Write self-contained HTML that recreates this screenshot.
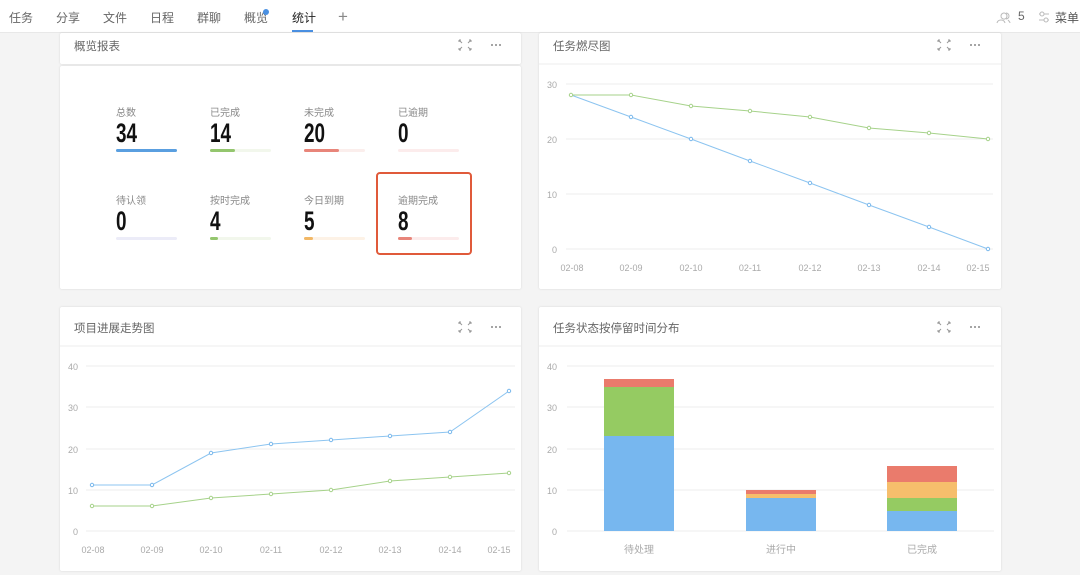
<!DOCTYPE html>
<html><head><meta charset="utf-8"><style>
*{margin:0;padding:0;box-sizing:border-box}
body{width:1080px;height:575px;overflow:hidden;background:#f4f4f4;font-family:"Liberation Sans","Noto Sans CJK SC",sans-serif;position:relative}
.nav{position:absolute;left:0;top:0;width:1080px;height:33px;background:#fff;border-bottom:1px solid #e8e8e8}
.nav span{position:absolute;top:9px;font-size:12px;color:#666}
.card{position:absolute;background:#fff;box-shadow:0 0 2px rgba(0,0,0,.12);border-radius:2px}
.ttl{position:absolute;font-size:11.5px;color:#666}
.lbl{position:absolute;font-size:10px;color:#888}
.num{position:absolute;font-family:"Liberation Sans",sans-serif;font-weight:bold;font-size:27px;line-height:27px;color:#111;transform:scaleX(.7);transform-origin:left}
.bar{position:absolute;height:3px;width:61px;border-radius:2px}
.bar i{display:block;height:3px;border-radius:2px}
svg{position:absolute;left:0;top:0}
</style></head><body>
<div class="nav">
<span style="left:9px">任务</span><span style="left:56px">分享</span><span style="left:103px">文件</span><span style="left:150px">日程</span><span style="left:197px">群聊</span><span style="left:244px">概览</span><span style="left:292px;color:#222">统计</span>
<span style="left:338px;font-size:17px;top:7px;color:#888">+</span>
<div style="position:absolute;left:263px;top:9px;width:6px;height:6px;border-radius:50%;background:#4a90e2"></div>
<div style="position:absolute;left:292px;top:30px;width:21px;height:2px;background:#4a90e2"></div>
<span style="left:1018px;color:#666">5</span><span style="left:1055px;color:#555">菜单</span>
</div>
<div class="card" style="left:60px;top:33px;width:461px;height:31px"></div>
<div class="card" style="left:60px;top:66px;width:461px;height:223px"></div>
<div class="card" style="left:539px;top:33px;width:462px;height:256px"></div>
<div class="card" style="left:60px;top:307px;width:461px;height:264px"></div>
<div class="card" style="left:539px;top:307px;width:462px;height:264px"></div>
<div class="ttl" style="left:74px;top:38px">概览报表</div>
<div class="ttl" style="left:553px;top:38px">任务燃尽图</div>
<div class="ttl" style="left:74px;top:320px">项目进展走势图</div>
<div class="ttl" style="left:553px;top:320px">任务状态按停留时间分布</div>

<div class="lbl" style="left:116px;top:104px">总数</div><div class="num" style="left:116px;top:120px">34</div><div class="bar" style="left:116px;top:149px;background:#e8f1fb"><i style="width:61px;background:#5a9fe0"></i></div>
<div class="lbl" style="left:210px;top:104px">已完成</div><div class="num" style="left:210px;top:120px">14</div><div class="bar" style="left:210px;top:149px;background:#f2f7ec"><i style="width:25px;background:#94c66e"></i></div>
<div class="lbl" style="left:304px;top:104px">未完成</div><div class="num" style="left:304px;top:120px">20</div><div class="bar" style="left:304px;top:149px;background:#fbeeec"><i style="width:35px;background:#e8857a"></i></div>
<div class="lbl" style="left:398px;top:104px">已逾期</div><div class="num" style="left:398px;top:120px">0</div><div class="bar" style="left:398px;top:149px;background:#fcecec"></div>
<div class="lbl" style="left:116px;top:192px">待认领</div><div class="num" style="left:116px;top:208px">0</div><div class="bar" style="left:116px;top:237px;background:#ececf8"></div>
<div class="lbl" style="left:210px;top:192px">按时完成</div><div class="num" style="left:210px;top:208px">4</div><div class="bar" style="left:210px;top:237px;background:#f2f7ec"><i style="width:8px;background:#94c66e"></i></div>
<div class="lbl" style="left:304px;top:192px">今日到期</div><div class="num" style="left:304px;top:208px">5</div><div class="bar" style="left:304px;top:237px;background:#fdf2e6"><i style="width:9px;background:#f2b866"></i></div>
<div style="position:absolute;left:376px;top:172px;width:96px;height:83px;border:2px solid #e05a3a;border-radius:4px"></div>
<div class="lbl" style="left:398px;top:192px">逾期完成</div><div class="num" style="left:398px;top:208px">8</div><div class="bar" style="left:398px;top:237px;background:#fcecec"><i style="width:14px;background:#e8857a"></i></div>

<svg width="1080" height="575" font-family="Liberation Sans" font-size="9" fill="#aaa">
<g stroke="#bbb" fill="none" stroke-width="1">
<path d="M1001 16a3 3 0 1 1 0 .1M997 23c1-4 7-4 8 0M1006 13a3 3 0 0 1 0 6M1008 20c1 1 2 2 2 3"/>
<path d="M1039 14h10M1039 20h10"/><circle cx="1042" cy="14" r="2" fill="#fff"/><circle cx="1046" cy="20" r="2" fill="#fff"/>
</g>
<g stroke="#999" stroke-width="1" fill="none">
<path d="M459 40l3 3M459 40v2M459 40h2M471 40l-3 3M471 40v2M471 40h-2M459 50l3-3M459 50v-2M459 50h2M471 50l-3-3M471 50v-2M471 50h-2"/>
<path d="M938 40l3 3M938 40v2M938 40h2M950 40l-3 3M950 40v2M950 40h-2M938 50l3-3M938 50v-2M938 50h2M950 50l-3-3M950 50v-2M950 50h-2"/>
<path d="M459 322l3 3M459 322v2M459 322h2M471 322l-3 3M471 322v2M471 322h-2M459 332l3-3M459 332v-2M459 332h2M471 332l-3-3M471 332v-2M471 332h-2"/>
<path d="M938 322l3 3M938 322v2M938 322h2M950 322l-3 3M950 322v2M950 322h-2M938 332l3-3M938 332v-2M938 332h2M950 332l-3-3M950 332v-2M950 332h-2"/>
</g>
<g fill="#888"><circle cx="492" cy="45" r="1"/><circle cx="496" cy="45" r="1"/><circle cx="500" cy="45" r="1"/><circle cx="971" cy="45" r="1"/><circle cx="975" cy="45" r="1"/><circle cx="979" cy="45" r="1"/><circle cx="492" cy="327" r="1"/><circle cx="496" cy="327" r="1"/><circle cx="500" cy="327" r="1"/><circle cx="971" cy="327" r="1"/><circle cx="975" cy="327" r="1"/><circle cx="979" cy="327" r="1"/></g>
<g stroke="#eee"><path d="M539 64h462M60 346h461M539 346h462"/>
<path d="M566 84h427M566 139h427M566 194h427M566 249h427"/>
<path d="M86 366h429M86 407h429M86 449h429M86 490h429M86 531h429"/>
<path d="M567 366h427M567 407h427M567 449h427M567 490h427M567 531h427"/></g>
<g text-anchor="end"><text x="557" y="88">30</text><text x="557" y="143">20</text><text x="557" y="198">10</text><text x="557" y="253">0</text>
<text x="78" y="370">40</text><text x="78" y="411">30</text><text x="78" y="453">20</text><text x="78" y="494">10</text><text x="78" y="535">0</text>
<text x="557" y="370">40</text><text x="557" y="411">30</text><text x="557" y="453">20</text><text x="557" y="494">10</text><text x="557" y="535">0</text></g>
<g text-anchor="middle"><text x="572" y="271">02-08</text><text x="631" y="271">02-09</text><text x="691" y="271">02-10</text><text x="750" y="271">02-11</text><text x="810" y="271">02-12</text><text x="869" y="271">02-13</text><text x="929" y="271">02-14</text><text x="978" y="271">02-15</text>
<text x="93" y="553">02-08</text><text x="152" y="553">02-09</text><text x="211" y="553">02-10</text><text x="271" y="553">02-11</text><text x="331" y="553">02-12</text><text x="390" y="553">02-13</text><text x="450" y="553">02-14</text><text x="499" y="553">02-15</text>
<text x="639" y="553" font-size="10">待处理</text><text x="781" y="553" font-size="10">进行中</text><text x="922" y="553" font-size="10">已完成</text></g>
<g fill="#fff" stroke-width="1">
<polyline fill="none" stroke="#a6d28a" points="571,95 631,95 691,106 750,111 810,117 869,128 929,133 988,139"/>
<polyline fill="none" stroke="#8cc4f0" points="571,95 631,117 691,139 750,161 810,183 869,205 929,227 988,249"/>
<g stroke="#a6d28a"><circle cx="571" cy="95" r="1.7"/><circle cx="631" cy="95" r="1.7"/><circle cx="691" cy="106" r="1.7"/><circle cx="750" cy="111" r="1.7"/><circle cx="810" cy="117" r="1.7"/><circle cx="869" cy="128" r="1.7"/><circle cx="929" cy="133" r="1.7"/><circle cx="988" cy="139" r="1.7"/></g>
<g stroke="#7ab8ec"><circle cx="631" cy="117" r="1.7"/><circle cx="691" cy="139" r="1.7"/><circle cx="750" cy="161" r="1.7"/><circle cx="810" cy="183" r="1.7"/><circle cx="869" cy="205" r="1.7"/><circle cx="929" cy="227" r="1.7"/><circle cx="988" cy="249" r="1.7"/></g>
<polyline fill="none" stroke="#8cc4f0" points="92,485 152,485 211,453 271,444 331,440 390,436 450,432 509,391"/>
<polyline fill="none" stroke="#a6d28a" points="92,506 152,506 211,498 271,494 331,490 390,481 450,477 509,473"/>
<g stroke="#7ab8ec"><circle cx="92" cy="485" r="1.7"/><circle cx="152" cy="485" r="1.7"/><circle cx="211" cy="453" r="1.7"/><circle cx="271" cy="444" r="1.7"/><circle cx="331" cy="440" r="1.7"/><circle cx="390" cy="436" r="1.7"/><circle cx="450" cy="432" r="1.7"/><circle cx="509" cy="391" r="1.7"/></g>
<g stroke="#a6d28a"><circle cx="92" cy="506" r="1.7"/><circle cx="152" cy="506" r="1.7"/><circle cx="211" cy="498" r="1.7"/><circle cx="271" cy="494" r="1.7"/><circle cx="331" cy="490" r="1.7"/><circle cx="390" cy="481" r="1.7"/><circle cx="450" cy="477" r="1.7"/><circle cx="509" cy="473" r="1.7"/></g>
</g>
<rect x="604" y="436" width="70" height="95" fill="#77b7ef"/><rect x="604" y="387" width="70" height="49" fill="#95cb62"/><rect x="604" y="379" width="70" height="8" fill="#ea7b6c"/>
<rect x="746" y="498" width="70" height="33" fill="#77b7ef"/><rect x="746" y="494" width="70" height="4" fill="#f6be6c"/><rect x="746" y="490" width="70" height="4" fill="#ea7b6c"/>
<rect x="887" y="511" width="70" height="20" fill="#77b7ef"/><rect x="887" y="498" width="70" height="13" fill="#95cb62"/><rect x="887" y="482" width="70" height="16" fill="#f6be6c"/><rect x="887" y="466" width="70" height="16" fill="#ea7b6c"/>
</svg>
</body></html>
